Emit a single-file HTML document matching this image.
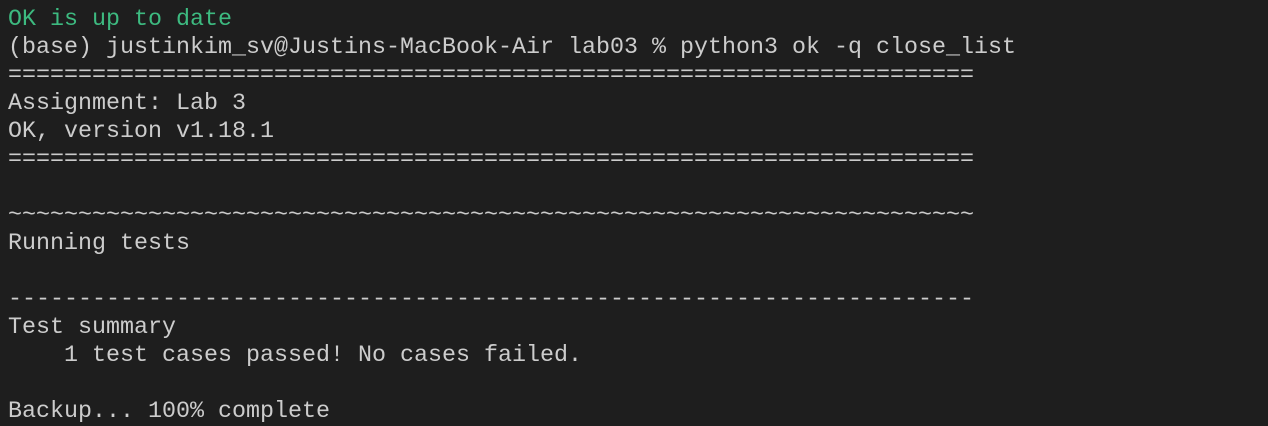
<!DOCTYPE html>
<html><head><style>
html,body{margin:0;padding:0;background:#1e1e1e;width:1268px;height:422px;overflow:hidden}
pre{margin:0;position:absolute;left:8px;top:6px;font-family:"Liberation Mono",monospace;font-size:23.33px;line-height:28px;color:#cccccc;white-space:pre}
.g{color:#3dba80}
</style></head><body>
<pre><span class="g">OK is up to date</span>
(base) justinkim_sv@Justins-MacBook-Air lab03 % python3 ok -q close_list
=====================================================================
Assignment: Lab 3
OK, version v1.18.1
=====================================================================

~~~~~~~~~~~~~~~~~~~~~~~~~~~~~~~~~~~~~~~~~~~~~~~~~~~~~~~~~~~~~~~~~~~~~
Running tests

---------------------------------------------------------------------
Test summary
    1 test cases passed! No cases failed.

Backup... 100% complete</pre>
</body></html>
